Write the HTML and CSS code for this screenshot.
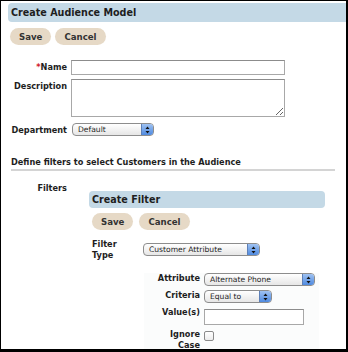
FILE: index.html
```html
<!DOCTYPE html>
<html>
    <head>
        <link rel="stylesheet" href="styles.css">
    </head>
    <body>
        <div class="frame">
            <div class="titlebar">Create Audience Model</div>
            <div class="buttons">
                <button class="pill">Save</button>
                <button class="pill">Cancel</button>
            </div>
            <div class="form">
                <div class="row">
                    <label class="lbl"><span class="req">*</span>Name</label>
                    <input class="text name" type="text">
                </div>
                <div class="row">
                    <label class="lbl">Description</label>
                    <textarea class="area"></textarea>
                </div>
                <div class="row dept-row">
                    <label class="lbl">Department</label>
                    <div class="select dept"><span>Default</span><i class="arrows"><svg width="5" height="8" viewBox="0 0 5 8"><path d="M2.5 0.5L4.5 3H0.5Z M2.5 7.5L4.5 5H0.5Z" fill="#111"/></svg></i></div>
                </div>
            </div>
            <div class="section">Define filters to select Customers in the Audience</div>
            <div class="row filters-row">
                <label class="lbl">Filters</label>
                <div class="panel">
                    <div class="subbar">Create Filter</div>
                    <div class="buttons sub">
                        <button class="pill">Save</button>
                        <button class="pill">Cancel</button>
                    </div>
                    <div class="ftype">
                        <label class="lbl2">Filter<br>Type</label>
                        <div class="select custattr"><span>Customer Attribute</span><i class="arrows"><svg width="5" height="8" viewBox="0 0 5 8"><path d="M2.5 0.5L4.5 3H0.5Z M2.5 7.5L4.5 5H0.5Z" fill="#111"/></svg></i></div>
                    </div>
                    <div class="crit">
                        <div class="crow">
                            <label class="clbl">Attribute</label>
                            <div class="select attr"><span>Alternate Phone</span><i class="arrows"><svg width="5" height="8" viewBox="0 0 5 8"><path d="M2.5 0.5L4.5 3H0.5Z M2.5 7.5L4.5 5H0.5Z" fill="#111"/></svg></i></div>
                        </div>
                        <div class="crow">
                            <label class="clbl">Criteria</label>
                            <div class="select equal"><span>Equal to</span><i class="arrows"><svg width="5" height="8" viewBox="0 0 5 8"><path d="M2.5 0.5L4.5 3H0.5Z M2.5 7.5L4.5 5H0.5Z" fill="#111"/></svg></i></div>
                        </div>
                        <div class="crow">
                            <label class="clbl">Value(s)</label>
                            <input class="text value" type="text">
                        </div>
                        <div class="crow">
                            <label class="clbl">Ignore<br>Case</label>
                            <span class="check"></span>
                        </div>
                    </div>
                </div>
            </div>
        </div>
    </body>
</html>
```

FILE: styles.css
```css
body{
    margin:0px;
    background:white;
    font-family:"DejaVu Sans", Verdana, sans-serif;
    color:#1e1e1e;
}
.frame{
    width:348px;
    height:352px;
    box-sizing:border-box;
    border-style:solid;
    border-color:black;
    border-width:1px 2px 3px 1px;
    overflow:hidden;
}
.titlebar{
    margin:2px 0 0 7px;
    height:19px;
    line-height:19px;
    background:#c4d9e6;
    border-radius:4px 0 0 4px;
    padding-left:3px;
    font-weight:bold;
    font-size:9.6px;
}
.buttons{
    display:flex;
    gap:4px;
    margin:6px 0 0 9px;
}
.pill{
    border:none;
    background:#e6d9c6;
    border-radius:9px;
    height:17px;
    padding:0 9px;
    font-family:"DejaVu Sans", Verdana, sans-serif;
    font-weight:bold;
    font-size:8.6px;
    color:#333;
}
.form{
    margin-top:15px;
}
.row{
    display:flex;
    align-items:flex-start;
    margin-bottom:4px;
}
.lbl{
    width:66px;
    text-align:right;
    font-weight:bold;
    font-size:8.2px;
    padding-top:2px;
    margin-right:4px;
}
.req{
    color:#d0202a;
}
.text{
    border:1px solid #a8a8a8;
    border-top-color:#8c8c8c;
    height:15px;
    box-sizing:border-box;
    margin:0;
    padding:0;
}
.name{
    width:214px;
}
.area{
    width:214px;
    height:38px;
    box-sizing:border-box;
    border:1px solid #a8a8a8;
    border-top-color:#8c8c8c;
    margin:0;
    resize:both;
}
.dept-row{
    margin-top:6px;
}
.select{
    display:flex;
    align-items:center;
    justify-content:space-between;
    height:13px;
    box-sizing:border-box;
    border:1px solid #8d8d8d;
    border-radius:4px;
    background:linear-gradient(#ffffff, #e6e6e6);
    font-size:7.6px;
    padding-left:5px;
    overflow:hidden;
    margin-left:1px;
}
.arrows{
    display:flex;
    align-items:center;
    justify-content:center;
    width:11px;
    height:100%;
    background:linear-gradient(#9fc2f2, #4f8ae0);
    border-left:1px solid #5d80b8;
}
.dept{
    width:82px;
}
.section{
    margin:21px 11px 0 10px;
    font-weight:bold;
    font-size:8.2px;
    padding-bottom:2px;
    border-bottom:2px solid #d4d4d4;
}
.filters-row{
    margin-top:11px;
}
.filters-row .lbl{
    padding-top:1px;
}
.panel{
    margin:9px 0 0 18px;
}
.subbar{
    width:233px;
    height:17px;
    line-height:17px;
    background:#c4d9e6;
    border-radius:4px;
    padding-left:3px;
    font-weight:bold;
    font-size:9.6px;
}
.buttons.sub{
    margin:5px 0 0 3px;
    gap:6px;
}
.ftype{
    display:flex;
    align-items:flex-start;
    margin:9px 0 0 3px;
}
.lbl2{
    width:50px;
    font-weight:bold;
    font-size:8.2px;
    line-height:11px;
}
.select.custattr{
    width:117px;
    margin-top:4px;
}
.crit{
    margin:12px 0 0 0;
    background:linear-gradient(to right, white 55px, #fbfcfc 55px, #fbfcfc 230px, white 230px);
}
.crow{
    display:flex;
    align-items:flex-start;
    margin-bottom:4px;
}
.clbl{
    width:111px;
    text-align:right;
    font-weight:bold;
    font-size:8.2px;
    line-height:11px;
    margin-right:3px;
}
.select.attr{
    width:111px;
}
.select.equal{
    width:68px;
}
.value{
    width:100px;
    height:16px;
    margin-left:1px;
    margin-top:2px;
}
.check{
    display:inline-block;
    width:8px;
    height:8px;
    border:1px solid #8a8a8a;
    border-radius:2px;
    margin:2px 0 0 1px;
    background:linear-gradient(#fff,#ececec);
}
```
